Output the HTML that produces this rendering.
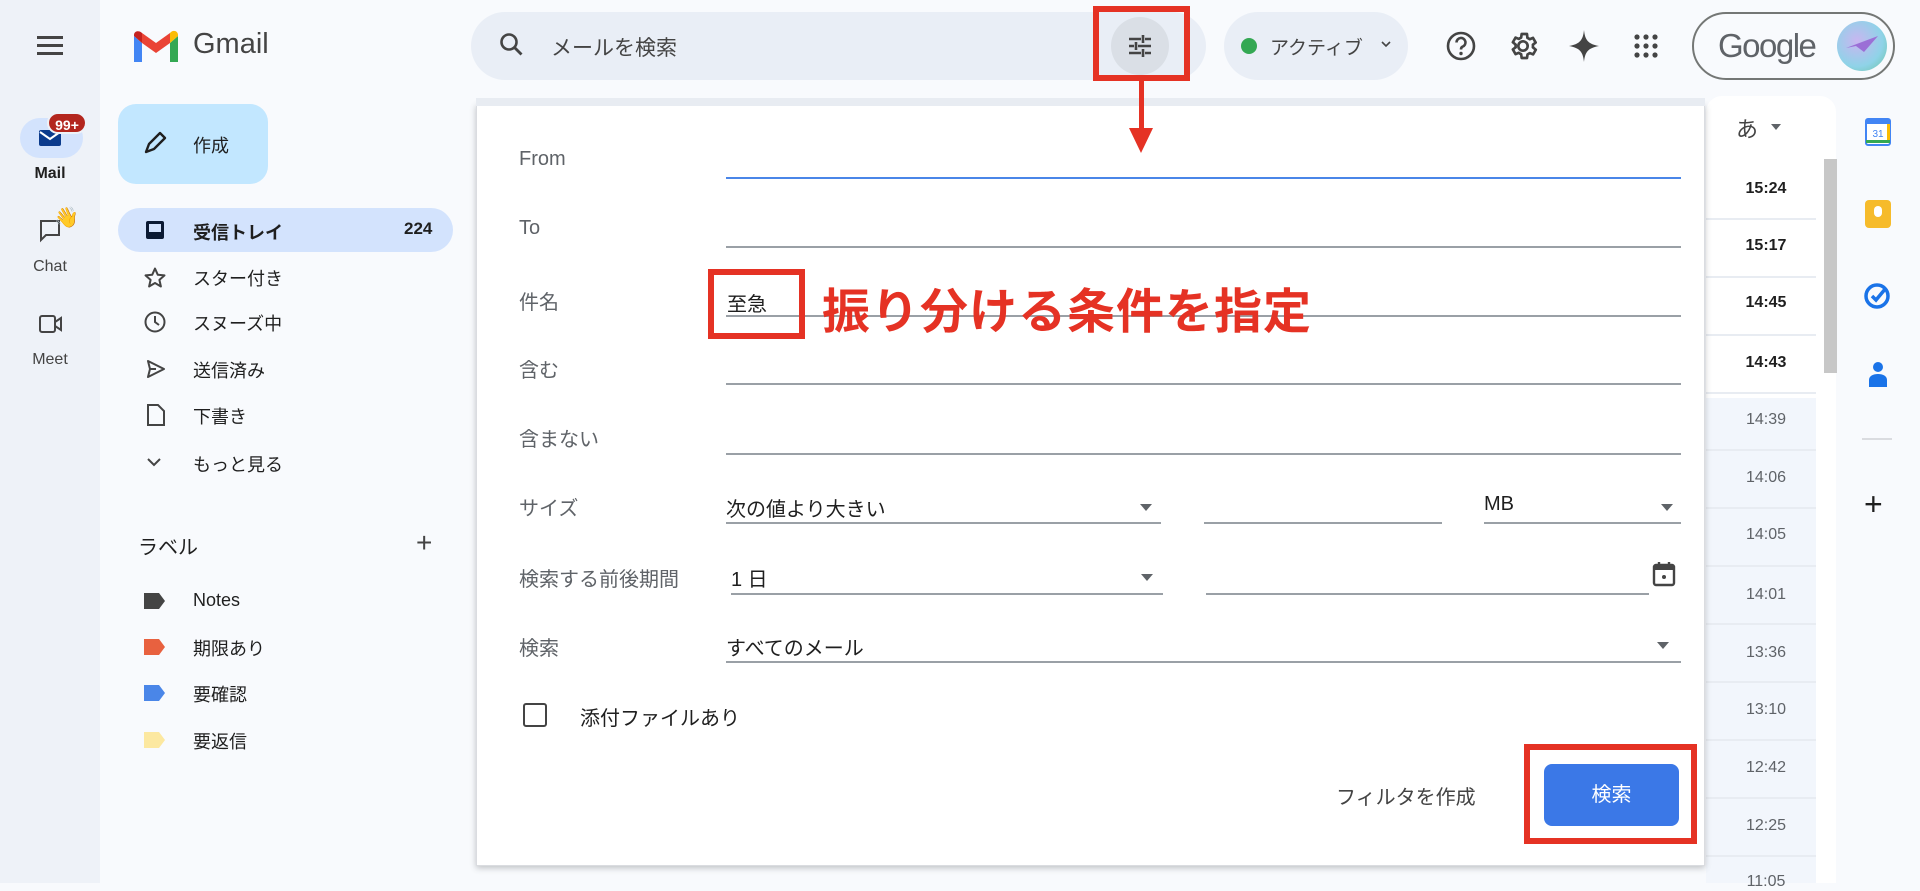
<!DOCTYPE html>
<html><head><meta charset="utf-8"><style>
*{box-sizing:border-box;margin:0;padding:0}
body{width:1920px;height:883px;overflow:hidden;background:#f8fafd;font-family:"Liberation Sans","Noto Sans CJK JP",sans-serif;color:#1f1f1f;position:relative}
.a{position:absolute}
.rail{left:0;top:0;width:100px;height:883px;background:#eef2f8}
.nl{font-size:18px;color:#1f1f1f}
.t{font-size:20px;color:#5f6368}
.line{position:absolute;height:2px;background:#9aa0a6}
.time{position:absolute;left:1706px;width:120px;text-align:center;font-size:16px;color:#5f6368}
.time.b{font-weight:bold;color:#1f1f1f}
.sep{position:absolute;left:1706px;width:110px;height:2px;background:#e8ecf2}
.red{border:6px solid #e53224;position:absolute}
.tri{width:0;height:0;border-left:6px solid transparent;border-right:6px solid transparent;border-top:7px solid #5f6368;position:absolute}
</style></head><body>
<div class="a rail"></div>
<svg class="a" style="left:37px;top:33px" width="26" height="24"><rect y="3" width="26" height="3" fill="#444"/><rect y="11" width="26" height="3" fill="#444"/><rect y="19" width="26" height="3" fill="#444"/></svg>
<div class="a" style="left:20px;top:118px;width:63px;height:40px;border-radius:20px;background:#d3e3fd"></div>
<svg class="a" style="left:38px;top:128px" width="24" height="20"><rect x="1" y="2" width="22" height="16" rx="2" fill="#0b3b8c"/><path d="M2 4l10 7 10-7" stroke="#fff" stroke-width="2" fill="none"/></svg>
<div class="a" style="left:47px;top:112px;width:40px;height:22px;border-radius:11px;background:#b3261e;color:#fff;font-size:14px;font-weight:bold;text-align:center;line-height:22px;border:2px solid #eef2f8">99+</div>
<div class="a" style="left:0;top:165px;width:100px;text-align:center;font-size:16px;font-weight:bold">Mail</div>
<svg class="a" style="left:38px;top:218px" width="26" height="26"><path d="M3 3h18v14H8l-5 5z" stroke="#444" stroke-width="2" fill="none"/></svg>
<div class="a" style="left:54px;top:205px;font-size:20px">👋</div>
<div class="a" style="left:0;top:258px;width:100px;text-align:center;font-size:16px;color:#444">Chat</div>
<svg class="a" style="left:38px;top:313px" width="26" height="22"><rect x="2" y="3" width="15" height="16" rx="2" stroke="#444" stroke-width="2" fill="none"/><path d="M17 9l6-4v12l-6-4z" stroke="#444" stroke-width="2" fill="none"/></svg>
<div class="a" style="left:0;top:351px;width:100px;text-align:center;font-size:16px;color:#444">Meet</div>
<svg class="a" style="left:134px;top:30px" width="44" height="34" viewBox="0 0 44 34"><path d="M0 6v26h8V13z" fill="#4285f4"/><path d="M36 13v19h8V6z" fill="#34a853"/><path d="M36 3v10l8-7V5c0-4-5-6-8-2z" fill="#fbbc04"/><path d="M8 13V3l14 10L36 3v10L22 23z" fill="#ea4335"/><path d="M0 5v1l8 7V3C5 0 0 1 0 5z" fill="#c5221f"/></svg>
<div class="a" style="left:193px;top:28px;font-size:29px;color:#444">Gmail</div>
<div class="a" style="left:118px;top:104px;width:150px;height:80px;border-radius:18px;background:#c2e7ff"></div>
<svg class="a" style="left:142px;top:130px" width="26" height="26"><path d="M4 22l3-8L18 3l5 5-11 11z" stroke="#1f1f1f" stroke-width="2.4" fill="none" stroke-linejoin="round"/></svg>
<div class="a nl" style="left:193px;top:132px">作成</div>
<div class="a" style="left:118px;top:208px;width:335px;height:44px;border-radius:22px;background:#d3e3fd"></div>
<svg class="a" style="left:145px;top:220px" width="20" height="20"><rect x="1" y="1" width="18" height="18" rx="2" fill="#0b1a33"/><rect x="4" y="4" width="12" height="8" fill="#d3e3fd"/></svg>
<div class="a nl" style="left:193px;top:219px;font-weight:bold">受信トレイ</div>
<div class="a nl" style="left:404px;top:219px;font-weight:bold;font-size:17px">224</div>
<svg class="a" style="left:143px;top:266px" width="24" height="24" viewBox="0 0 24 24"><path d="M12 2.5l2.8 6.3 6.7.6-5.1 4.5 1.5 6.6L12 17l-5.9 3.5 1.5-6.6-5.1-4.5 6.7-.6z" stroke="#444" stroke-width="2" fill="none" stroke-linejoin="round"/></svg>
<div class="a nl" style="left:193px;top:265px">スター付き</div>
<svg class="a" style="left:143px;top:310px" width="24" height="24"><circle cx="12" cy="12" r="9.5" stroke="#444" stroke-width="2" fill="none"/><path d="M12 6v6l4 3" stroke="#444" stroke-width="2" fill="none"/></svg>
<div class="a nl" style="left:193px;top:310px">スヌーズ中</div>
<svg class="a" style="left:145px;top:358px" width="22" height="22"><path d="M3 3l16 8-16 8 2-8z M5 11h6" stroke="#444" stroke-width="2" fill="none" stroke-linejoin="round"/></svg>
<div class="a nl" style="left:193px;top:357px">送信済み</div>
<svg class="a" style="left:146px;top:403px" width="20" height="24"><path d="M2 2h10l6 6v14H2z" stroke="#444" stroke-width="2" fill="none"/></svg>
<div class="a nl" style="left:193px;top:403px">下書き</div>
<svg class="a" style="left:146px;top:457px" width="16" height="12"><path d="M2 2l6 6 6-6" stroke="#444" stroke-width="2" fill="none"/></svg>
<div class="a nl" style="left:193px;top:451px">もっと見る</div>
<div class="a" style="left:138px;top:531px;font-size:20px">ラベル</div>
<div class="a" style="left:416px;top:527px;font-size:28px;color:#444">+</div>
<svg class="a" style="left:143px;top:592px" width="24" height="18"><path d="M1 1h15l6 8-6 8H1z" fill="#444"/></svg>
<div class="a nl" style="left:193px;top:590px">Notes</div>
<svg class="a" style="left:143px;top:638px" width="24" height="18"><path d="M1 1h15l6 8-6 8H1z" fill="#e8613f"/></svg>
<div class="a nl" style="left:193px;top:635px">期限あり</div>
<svg class="a" style="left:143px;top:684px" width="24" height="18"><path d="M1 1h15l6 8-6 8H1z" fill="#4a86e8"/></svg>
<div class="a nl" style="left:193px;top:681px">要確認</div>
<svg class="a" style="left:143px;top:731px" width="24" height="18"><path d="M1 1h15l6 8-6 8H1z" fill="#fce8a0"/></svg>
<div class="a nl" style="left:193px;top:728px">要返信</div>
<div class="a" style="left:471px;top:12px;width:735px;height:68px;border-radius:34px;background:#e9eef6"></div>
<svg class="a" style="left:498px;top:31px" width="28" height="28"><circle cx="11" cy="11" r="7.5" stroke="#444" stroke-width="2.6" fill="none"/><path d="M16.5 16.5l7 7" stroke="#444" stroke-width="2.8"/></svg>
<div class="a" style="left:551px;top:32px;font-size:21px;color:#444">メールを検索</div>
<div class="a" style="left:1111px;top:17px;width:58px;height:58px;border-radius:29px;background:#dadfe6"></div>
<svg class="a" style="left:1126px;top:32px" width="28" height="28" viewBox="0 0 28 28"><g stroke="#444" stroke-width="2.6"><path d="M3 7h12M19 7h6M17 3v8M3 14h5M12 14h13M10 10v8M3 21h12M19 21h6M17 17v8"/></g></svg>
<div class="red" style="left:1093px;top:6px;width:97px;height:75px"></div>
<div class="a" style="left:1224px;top:12px;width:184px;height:68px;border-radius:34px;background:#e9eef6"></div>
<div class="a" style="left:1241px;top:38px;width:16px;height:16px;border-radius:8px;background:#34a853"></div>
<div class="a" style="left:1270px;top:33px;font-size:19px;color:#444">アクティブ</div>
<svg class="a" style="left:1380px;top:40px" width="12" height="10"><path d="M2 2l4 4 4-4" stroke="#444" stroke-width="1.6" fill="none"/></svg>
<svg class="a" style="left:1445px;top:30px" width="32" height="32"><circle cx="16" cy="16" r="13" stroke="#444" stroke-width="2.6" fill="none"/><path d="M11.5 12.5a4.5 4.5 0 1 1 6 4.2c-1 .5-1.5 1.3-1.5 2.8" stroke="#444" stroke-width="2.6" fill="none"/><circle cx="16" cy="23.5" r="1.7" fill="#444"/></svg>
<svg class="a" style="left:1507px;top:29px" width="32" height="34" viewBox="0 0 24 24"><path d="M12 15.5a3.5 3.5 0 1 0 0-7 3.5 3.5 0 0 0 0 7z" stroke="#444" stroke-width="2" fill="none"/><path d="M19.4 13a7.5 7.5 0 0 0 0-2l2.1-1.6-2-3.5-2.5 1a7.4 7.4 0 0 0-1.7-1L15 3h-4l-.4 2.7a7.4 7.4 0 0 0-1.7 1l-2.5-1-2 3.5L6.5 11a7.5 7.5 0 0 0 0 2l-2.1 1.6 2 3.5 2.5-1c.5.4 1.1.8 1.7 1L11 21h4l.4-2.7c.6-.3 1.2-.6 1.7-1l2.5 1 2-3.5z" stroke="#444" stroke-width="2" fill="none" stroke-linejoin="round"/></svg>
<svg class="a" style="left:1568px;top:29px" width="32" height="34" viewBox="0 0 32 34"><path d="M16 1C17 11 20 15 31 17 20 19 17 23 16 33 15 23 12 19 1 17 12 15 15 11 16 1z" fill="#444"/></svg>
<svg class="a" style="left:1633px;top:33px" width="26" height="26"><g fill="#444"><circle cx="4" cy="4" r="2.6"/><circle cx="13" cy="4" r="2.6"/><circle cx="22" cy="4" r="2.6"/><circle cx="4" cy="13" r="2.6"/><circle cx="13" cy="13" r="2.6"/><circle cx="22" cy="13" r="2.6"/><circle cx="4" cy="22" r="2.6"/><circle cx="13" cy="22" r="2.6"/><circle cx="22" cy="22" r="2.6"/></g></svg>
<div class="a" style="left:1692px;top:12px;width:203px;height:68px;border-radius:34px;border:2px solid #747775;background:#f8fafd"></div>
<div class="a" style="left:1718px;top:27px;font-size:33px;color:#5f6368;letter-spacing:-1.5px">Google</div>
<div class="a" style="left:1837px;top:21px;width:50px;height:50px;border-radius:25px;background:radial-gradient(circle at 40% 40%,#c9b6f0,#8fd3e8 60%,#6bc2a0)"></div>
<svg class="a" style="left:1842px;top:28px" width="40" height="36"><path d="M4 20L36 8 22 24 14 18z" fill="#9b6fd6"/></svg>
<div class="a" style="left:1706px;top:96px;width:130px;height:787px;background:#fff;border-radius:16px 16px 0 0"></div>
<div class="a" style="left:1706px;top:398px;width:110px;height:485px;background:#f2f6fc"></div>
<div class="a" style="left:1824px;top:159px;width:13px;height:214px;background:#c7c7c7"></div>
<div class="a" style="left:1736px;top:112px;font-size:22px;color:#444">あ</div>
<div class="tri" style="left:1771px;top:124px;border-width:6px 5px 0 5px"></div>
<div class="time b" style="top:180px">15:24</div>
<div class="sep" style="top:218px"></div>
<div class="time b" style="top:237px">15:17</div>
<div class="sep" style="top:276px"></div>
<div class="time b" style="top:294px">14:45</div>
<div class="sep" style="top:334px"></div>
<div class="time b" style="top:354px">14:43</div>
<div class="sep" style="top:392px"></div>
<div class="time" style="top:411px">14:39</div>
<div class="sep" style="top:449px"></div>
<div class="time" style="top:469px">14:06</div>
<div class="sep" style="top:507px"></div>
<div class="time" style="top:526px">14:05</div>
<div class="sep" style="top:565px"></div>
<div class="time" style="top:586px">14:01</div>
<div class="sep" style="top:623px"></div>
<div class="time" style="top:644px">13:36</div>
<div class="sep" style="top:681px"></div>
<div class="time" style="top:701px">13:10</div>
<div class="sep" style="top:739px"></div>
<div class="time" style="top:759px">12:42</div>
<div class="sep" style="top:797px"></div>
<div class="time" style="top:817px">12:25</div>
<div class="sep" style="top:855px"></div>
<div class="time" style="top:873px">11:05</div>
<svg class="a" style="left:1865px;top:118px" width="26" height="28"><rect x="1" y="1" width="24" height="26" rx="2" fill="#fff" stroke="#4285f4" stroke-width="2"/><rect x="1" y="1" width="24" height="5" fill="#4285f4"/><path d="M1 22h24v3H1z" fill="#34a853"/><path d="M22 6h3v16h-3z" fill="#fbbc04"/><text x="13" y="19" font-size="10" text-anchor="middle" fill="#4285f4" font-family="Liberation Sans">31</text></svg>
<div class="a" style="left:1865px;top:200px;width:26px;height:28px;border-radius:4px;background:#f6bb2b"></div>
<div class="a" style="left:1874px;top:206px;width:8px;height:11px;border-radius:4px;background:#fff"></div>
<svg class="a" style="left:1863px;top:280px" width="30" height="30"><circle cx="14" cy="16" r="11" stroke="#1a73e8" stroke-width="3.5" fill="none"/><path d="M9 16l4 4 10-12" stroke="#1a73e8" stroke-width="3.5" fill="none"/></svg>
<svg class="a" style="left:1866px;top:360px" width="24" height="28"><circle cx="12" cy="7" r="5" fill="#1a73e8"/><path d="M3 27v-7c0-4 4-6 9-6s9 2 9 6v7z" fill="#1a73e8"/></svg>
<div class="a" style="left:1862px;top:438px;width:30px;height:2px;background:#dadce0"></div>
<div class="a" style="left:1864px;top:486px;font-size:32px;color:#1f1f1f">+</div>
<!-- dialog -->
<div class="a" style="left:476px;top:104px;width:1229px;height:762px;background:#fff;border:1px solid #dadce0;box-shadow:0 2px 6px rgba(60,64,67,.3)"></div>
<div class="a" style="left:476px;top:98px;width:1229px;height:8px;background:#e8ecf2"></div>
<div class="a" style="left:1139px;top:81px;width:5px;height:60px;background:#e53224"></div>
<div class="a" style="left:1129px;top:128px;width:0;height:0;border-left:12px solid transparent;border-right:12px solid transparent;border-top:25px solid #e53224"></div>
<div class="a t" style="left:519px;top:148px">From</div>
<div class="line" style="left:726px;top:177px;width:955px;background:#4a86e8"></div>
<div class="a t" style="left:519px;top:217px">To</div>
<div class="line" style="left:726px;top:246px;width:955px"></div>
<div class="a t" style="left:519px;top:286px">件名</div>
<div class="line" style="left:726px;top:315px;width:955px"></div>
<div class="a" style="left:727px;top:288px;font-size:20px">至急</div>
<div class="red" style="left:708px;top:269px;width:97px;height:70px"></div>
<div class="a" style="left:822px;top:272px;font-size:48px;font-weight:bold;color:#e53224;letter-spacing:1px">振り分ける条件を指定</div>
<div class="a t" style="left:519px;top:354px">含む</div>
<div class="line" style="left:726px;top:383px;width:955px"></div>
<div class="a t" style="left:519px;top:423px">含まない</div>
<div class="line" style="left:726px;top:453px;width:955px"></div>
<div class="a t" style="left:519px;top:492px">サイズ</div>
<div class="a" style="left:726px;top:493px;font-size:20px">次の値より大きい</div>
<div class="tri" style="left:1140px;top:504px"></div>
<div class="line" style="left:726px;top:522px;width:435px"></div>
<div class="line" style="left:1204px;top:522px;width:238px"></div>
<div class="a" style="left:1484px;top:493px;font-size:20px">MB</div>
<div class="tri" style="left:1661px;top:504px"></div>
<div class="line" style="left:1484px;top:522px;width:197px"></div>
<div class="a t" style="left:519px;top:563px">検索する前後期間</div>
<div class="a" style="left:731px;top:563px;font-size:20px">1 日</div>
<div class="tri" style="left:1141px;top:574px"></div>
<div class="line" style="left:731px;top:593px;width:432px"></div>
<div class="line" style="left:1206px;top:593px;width:443px"></div>
<svg class="a" style="left:1652px;top:560px" width="24" height="28"><rect x="2" y="5" width="20" height="20" rx="2" stroke="#444" stroke-width="2.4" fill="none"/><rect x="2" y="5" width="20" height="5" fill="#444"/><path d="M7 2v5M17 2v5" stroke="#444" stroke-width="2.4"/><circle cx="12" cy="17" r="2" fill="#444"/></svg>
<div class="a t" style="left:519px;top:632px">検索</div>
<div class="a" style="left:726px;top:632px;font-size:20px">すべてのメール</div>
<div class="tri" style="left:1657px;top:642px"></div>
<div class="line" style="left:726px;top:661px;width:955px"></div>
<div class="a" style="left:523px;top:703px;width:24px;height:24px;border:2.5px solid #444;border-radius:3px"></div>
<div class="a" style="left:580px;top:702px;font-size:20px">添付ファイルあり</div>
<div class="a t" style="left:1336px;top:781px;color:#444">フィルタを作成</div>
<div class="a" style="left:1544px;top:764px;width:135px;height:62px;border-radius:8px;background:#3b78e7;color:#fff;font-size:20px;text-align:center;line-height:62px">検索</div>
<div class="red" style="left:1524px;top:744px;width:173px;height:100px"></div>
</body></html>
